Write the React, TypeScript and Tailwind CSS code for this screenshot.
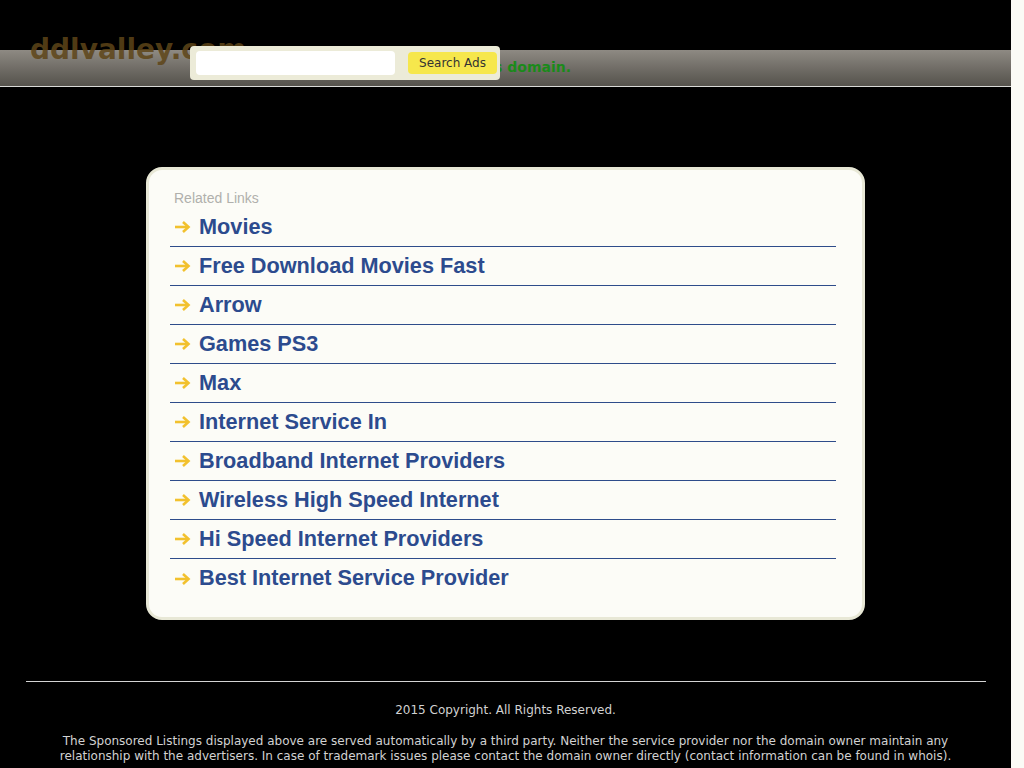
import React from "react";

const links = [
  "Movies",
  "Free Download Movies Fast",
  "Arrow",
  "Games PS3",
  "Max",
  "Internet Service In",
  "Broadband Internet Providers",
  "Wireless High Speed Internet",
  "Hi Speed Internet Providers",
  "Best Internet Service Provider",
];

function Arrow() {
  return (
    <svg width="17" height="14" viewBox="0 0 17 14" className="shrink-0">
      <path d="M1 7 H14" stroke="#f2c12e" strokeWidth="2.6" strokeLinecap="butt" fill="none" />
      <path d="M9 2 L14.5 7 L9 12" stroke="#f2c12e" strokeWidth="2.6" fill="none" strokeLinejoin="miter" />
    </svg>
  );
}

export default function App() {
  return (
    <div className="min-h-screen flex bg-[#fbfbf6]">
      <div className="w-[1011px] shrink-0 bg-black min-h-[768px] relative pb-6">
        <div className="h-[50px]" />
        <div className="h-[37px] border-b border-[#d9d9d6] bg-gradient-to-b from-[#8e8a83] to-[#55524c]" />

        <div
          className="absolute left-[438px] top-[59px] text-[14px] font-bold leading-[17px] text-[#1a8a1a]"
          style={{ fontFamily: '"DejaVu Sans", sans-serif' }}
        >
          Buy this domain.
        </div>

        <div
          className="absolute left-[30px] top-[36px] text-[28px] font-bold leading-[28px] text-[#5e4518]/85"
          style={{ fontFamily: '"DejaVu Sans", sans-serif' }}
        >
          ddlvalley.com
        </div>

        <div className="absolute left-[190px] top-[46px] w-[310px] h-[34px] rounded-[4px] bg-[#ecebd8] flex items-center pl-[6px] pr-[3px]">
          <div className="w-[199px] h-[24px] bg-white rounded-[4px]" />
          <div
            className="ml-[13px] w-[89px] h-[22px] rounded-[4px] bg-[#f6e74c] flex items-center justify-center text-[12px] text-[#333]"
            style={{ fontFamily: '"DejaVu Sans", sans-serif' }}
          >
            Search Ads
          </div>
        </div>

        <div
          className="mt-[80px] mx-auto w-[719px] rounded-[16px] border-[3px] border-[#e8e8d6] bg-[#fcfcf7] pt-[20px] pb-[19px] pl-[21px] pr-[26px]"
          style={{ fontFamily: '"Liberation Sans", Arial, sans-serif' }}
        >
          <div className="pl-[4px] text-[14px] leading-[16px] text-[#b0b0ac] mb-[2px]">Related Links</div>
          {links.map((l, i) => (
            <div
              key={l}
              className={
                "h-[39px] flex items-center pl-[4px] gap-[8px] " +
                (i < links.length - 1 ? "border-b border-[#2e4c8a]" : "")
              }
            >
              <Arrow />
              <span className="text-[21.7px] font-bold text-[#2c4b8e] leading-[26px] -mt-[1px]">{l}</span>
            </div>
          ))}
        </div>

        <div className="mt-[61px] mx-auto w-[960px] border-t border-[#d4d4d4]" />
        <div
          className="mx-auto w-[910px] text-center text-[12px] leading-[15px] text-[#d2d2d2]"
          style={{ fontFamily: '"DejaVu Sans", sans-serif' }}
        >
          <div className="mt-[21px]">2015 Copyright. All Rights Reserved.</div>
          <div className="mt-[16px]">
            The Sponsored Listings displayed above are served automatically by a third party. Neither the service provider nor the domain owner maintain any relationship with the advertisers. In case of trademark issues please contact the domain owner directly (contact information can be found in whois).
          </div>
        </div>
      </div>
      <div className="flex-1 bg-[#fbfbf6]" />
    </div>
  );
}
